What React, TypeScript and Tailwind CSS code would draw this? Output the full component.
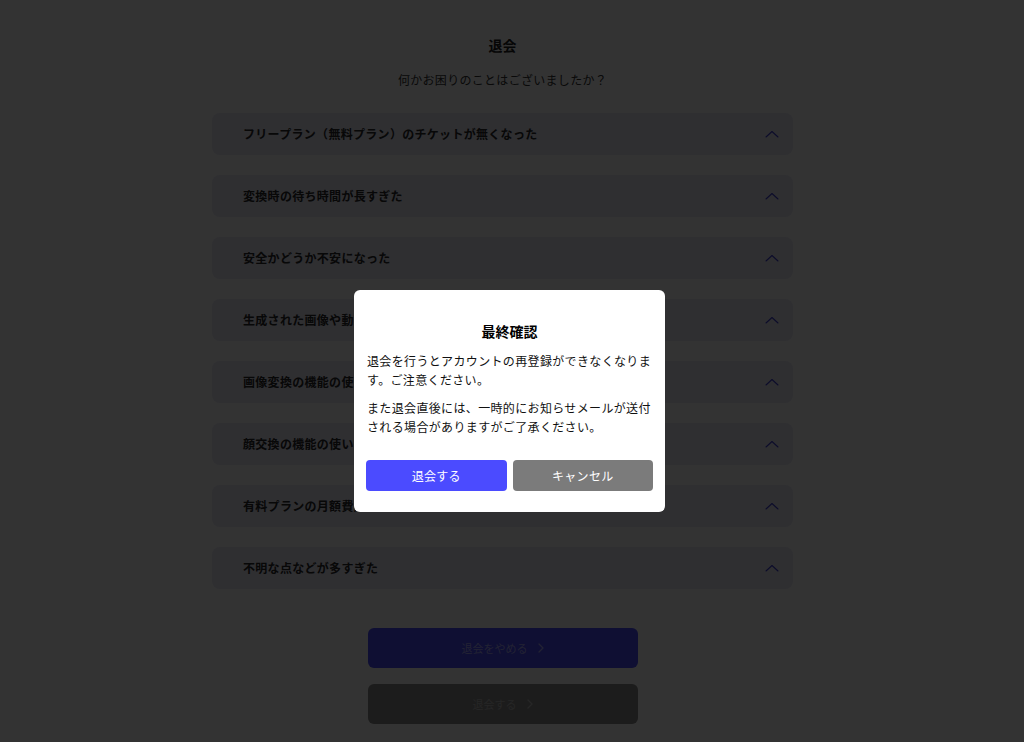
const reasons = [
  'フリープラン（無料プラン）のチケットが無くなった',
  '変換時の待ち時間が長すぎた',
  '安全かどうか不安になった',
  '生成された画像や動画のクオリティが低かった',
  '画像変換の機能の使い方がわからなかった',
  '顔交換の機能の使い方がわからなかった',
  '有料プランの月額費用が高かった',
  '不明な点などが多すぎた',
]

function ChevronUp() {
  return (
    <svg width="14" height="8" viewBox="0 0 14 8" fill="none">
      <polyline points="1,7 7,1.5 13,7" stroke="#3f3fd0" strokeWidth="1.1" strokeLinecap="round" strokeLinejoin="round" />
    </svg>
  )
}

function ChevronRight() {
  return (
    <svg width="6" height="10" viewBox="0 0 6 10" fill="none">
      <polyline points="1,1 5,5 1,9" stroke="currentColor" strokeWidth="1.3" strokeLinecap="round" strokeLinejoin="round" />
    </svg>
  )
}

export default function App() {
  return (
    <div
      className="relative w-[1024px] h-[742px] overflow-hidden bg-white text-[#333]"
      style={{ fontFamily: '"Noto Sans CJK JP", "Noto Sans", sans-serif' }}
    >
      {/* Page */}
      <div className="flex justify-center pr-[19px]">
        <div className="w-[581px] flex flex-col items-center pt-[35px]">
          <h1 className="text-[14px] leading-[20px] font-bold text-[#222]">退会</h1>
          <p className="mt-[15px] text-[12px] tracking-[0.3px] leading-[20px] text-[#333]">
            何かお困りのことはございましたか？
          </p>

          {/* Reasons */}
          <div className="mt-[23px] w-full flex flex-col gap-[20px]">
            {reasons.map((r) => (
              <div
                key={r}
                className="h-[42px] rounded-[8px] bg-[#e8e8f6] flex items-center justify-between pl-[31px] pr-[14px]"
              >
                <span className="text-[12px] tracking-[0.3px] font-bold text-[#2a2a2a]">{r}</span>
                <ChevronUp />
              </div>
            ))}
          </div>

          {/* Bottom buttons */}
          <div className="mt-[39px] flex flex-col gap-[16px]">
            <button className="w-[270px] h-[40px] rounded-[6px] bg-[#4b4bff] text-[#aaaaff] text-[11px] flex items-center justify-center gap-[10px]">
              <span>退会をやめる</span>
              <ChevronRight />
            </button>
            <button className="w-[270px] h-[40px] rounded-[6px] bg-[#8c8c8c] text-[#bcbcbc] text-[11px] flex items-center justify-center gap-[10px]">
              <span>退会する</span>
              <ChevronRight />
            </button>
          </div>
        </div>
      </div>

      {/* Overlay */}
      <div className="absolute inset-0 bg-black/80" />

      {/* Dialog */}
      <div className="absolute left-[354px] top-[290px] w-[311px] h-[222px] rounded-[6px] bg-white flex flex-col px-[13px] pt-[31px]">
        <h2 className="text-center text-[14px] leading-[20px] font-bold text-black">最終確認</h2>
        <p className="mt-[10px] text-[12px] tracking-[0.35px] leading-[19px] text-[#111]">
          退会を行うとアカウントの再登録ができなくなります。ご注意ください。
        </p>
        <p className="mt-[9px] text-[12px] tracking-[0.35px] leading-[19px] text-[#111]">
          また退会直後には、一時的にお知らせメールが送付される場合がありますがご了承ください。
        </p>
        <div className="mt-[24px] -mx-[1px] flex gap-[6px]">
          <button className="flex-1 h-[31px] rounded-[4px] bg-[#4b4bff] text-white text-[12px] tracking-[0.3px]">
            退会する
          </button>
          <button className="flex-1 h-[31px] rounded-[4px] bg-[#7b7b7b] text-white text-[12px] tracking-[0.3px]">
            キャンセル
          </button>
        </div>
      </div>
    </div>
  )
}
